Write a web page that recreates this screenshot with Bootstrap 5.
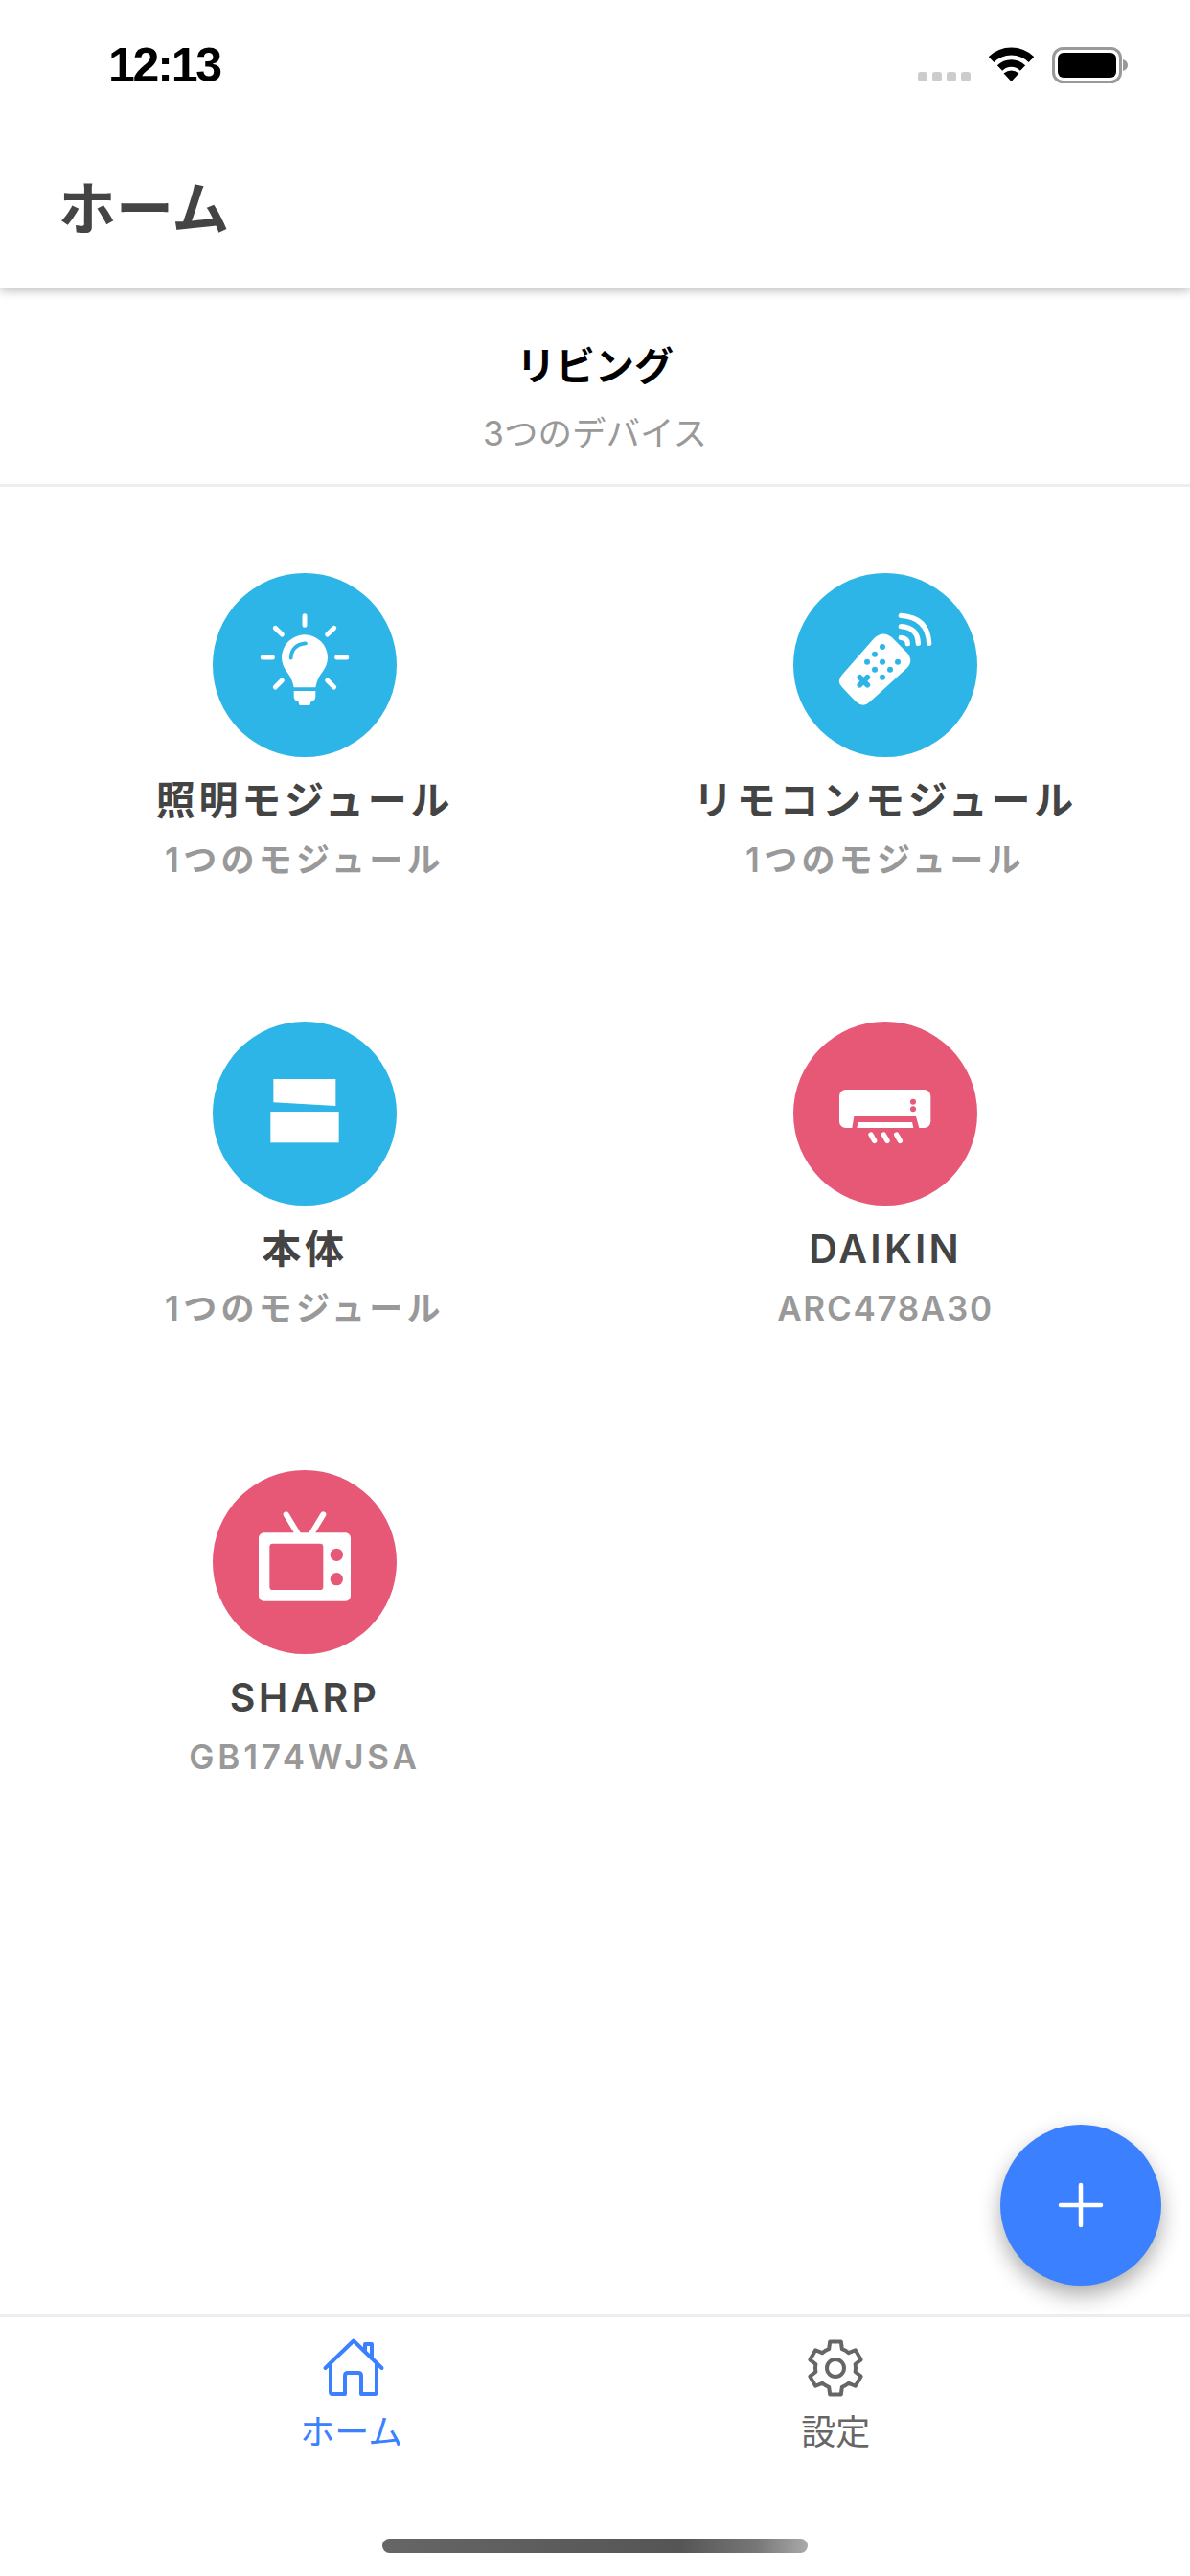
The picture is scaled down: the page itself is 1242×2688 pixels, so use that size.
<!DOCTYPE html>
<html lang="ja">
<head>
    <meta charset="UTF-8">
    <meta name="viewport" content="width=device-width, initial-scale=1.0">
    <title>ホーム</title>
    <link href="https://cdn.jsdelivr.net/npm/bootstrap@5.3.0/dist/css/bootstrap.min.css" rel="stylesheet">
    <style>
        body { font-family: Inter, "Noto Sans CJK JP", "Liberation Sans", sans-serif; background: #fff; }
        .app-page { height: 2688px; }
        .status-row { height: 100px; padding: 44px 65px 0 113px; z-index: 3; }
        .status-time { font: 700 50px/48px "Liberation Sans", sans-serif; letter-spacing: -2.2px; color: #000; }
        .signal-dots { gap: 5px; margin: 31px 19px 0 0; }
        .signal-dots span { width: 10px; height: 10px; border-radius: 3px; background: #ccc; }
        .wifi-icon { width: 47px; height: 36px; margin: 5px 19px 0 0; }
        .battery-icon { width: 79px; height: 38px; margin-top: 5px; }
        .top-head { height: 200px; padding: 0 0 0 61px; box-shadow: 0 3px 10px rgba(0,0,0,.28); z-index: 2; }
        .top-title { font-size: 60px; font-weight: 700; line-height: 1; color: #444; margin: 35px 0 0; }
        .room-head { height: 208px; border-bottom: 3px solid #eee; padding-top: 57px; }
        .room-name { font-size: 41px; font-weight: 700; line-height: 50px; color: #000; }
        .room-count { font-size: 35.500px; line-height: 50px; color: #999; margin-top: 21px; }
        .device-grid { padding: 90px 15px 0; }
        .device-cell { height: 468px; }
        .device-round { width: 192px; height: 192px; }
        .device-round svg { width: 192px; height: 192px; }
        .bg-room { background: #2cb5e6; }
        .bg-appliance { background: #e75877; }
        .device-name { font-size: 41px; font-weight: 600; line-height: 50px; letter-spacing: 3.800px; color: #444; margin-top: 20px; }
        .device-sub { font-size: 35px; font-weight: 600; line-height: 44px; letter-spacing: 4.300px; color: #999; margin-top: 15px; }
        .name-latin { letter-spacing: 3.200px; }
        .sub-latin { letter-spacing: 3.800px; }
        .sub-narrow { letter-spacing: 1.700px; }
        .add-fab { right: 30px; bottom: 303px; width: 168px; height: 168px; background: #3a80ff; border: 0; box-shadow: 0 10px 22px rgba(0,0,0,.32); }
        .add-fab svg { width: 48px; height: 48px; }
        .tab-strip { border-top: 3px solid #eee; height: 273px; padding: 21px 117px 0 114px; }
        .tab-link { color: #666; font-size: 36px; line-height: 40px; text-decoration: none; }
        .tab-link.is-on { color: #3a80ff; }
        .tab-link svg { width: 66px; height: 64px; margin-bottom: 15px; }
        .tab-link.is-on svg { margin-left: 5px; }
        .home-bar { left: 399px; bottom: 24px; width: 444px; height: 15px; border-radius: 8px; background: linear-gradient(90deg, #666 0%, #555 70%, #777 88%, #aaa 100%); }
    </style>
</head>
<body>
    <div class="app-page d-flex flex-column position-relative overflow-hidden">
        <!-- ステータスバー -->
        <div class="status-row d-flex flex-shrink-0 bg-white position-relative">
            <div class="status-time me-auto">12:13</div>
            <div class="signal-dots d-flex"><span></span><span></span><span></span><span></span></div>
            <svg class="wifi-icon" viewBox="0 0 47 36">
                <path d="M2.6 13.1A29.5 29.5 0 0 1 44.4 13.1" fill="none" stroke="#000" stroke-width="8"/>
                <path d="M11.5 22A17 17 0 0 1 35.5 22" fill="none" stroke="#000" stroke-width="7.5"/>
                <path d="M15.5 27.5Q23.5 21.5 31.5 27.5L23.5 36Z"/>
            </svg>
            <svg class="battery-icon" viewBox="0 0 79 38">
                <rect x="1.5" y="1.5" width="70" height="35" rx="10" fill="none" stroke="#999" stroke-width="3"/>
                <rect x="6" y="6" width="61" height="26" rx="6"/>
                <path d="M74 13q5 1.500 5 6t-5 6z" fill="#999"/>
            </svg>
        </div>

        <!-- ヘッダー -->
        <div class="top-head d-flex align-items-center bg-white flex-shrink-0 position-relative">
            <h1 class="top-title">ホーム</h1>
        </div>

        <div class="room-head text-center flex-shrink-0">
            <div class="room-name">リビング</div>
            <div class="room-count">3つのデバイス</div>
        </div>

        <div class="device-grid flex-grow-1">
            <div class="row g-0">
                <div class="col-6 device-cell d-flex flex-column align-items-center text-center">
                    <div class="device-round rounded-circle bg-room">
                        <svg viewBox="66 54 576 576">
                            <g stroke="#fff" stroke-width="15" stroke-linecap="round">
                                <path d="M354 188V217M262 226L283 246M446 226L425 246M223 318H253M455 318H485M262 411L283 390M446 411L425 390"/>
                            </g>
                            <path fill="#fff" d="M354 247A72 72 0 0 1 426 319C426 337 419 351 410 363C398 378 392 392 388 412H320C316 392 310 378 298 363C289 351 282 337 282 319A72 72 0 0 1 354 247Z"/>
                            <path fill="#fff" d="M320 423H388V440Q388 453 374 456L370 468H338L334 456Q320 453 320 440Z"/>
                            <path d="M311 320Q313 278 357 274" fill="none" stroke="#2cb5e6" stroke-width="11" stroke-linecap="round"/>
                        </svg>
                    </div>
                    <div class="device-name">照明モジュール</div>
                    <div class="device-sub">1つのモジュール</div>
                </div>
                <div class="col-6 device-cell d-flex flex-column align-items-center text-center">
                    <div class="device-round rounded-circle bg-room">
                        <svg viewBox="69 54 576 576">
                            <path fill="#fff" d="M322 258Q350 232 378 256L425 303Q448 330 422 354L310 456Q288 478 264 456L222 412Q203 392 222 372Z"/>
                            <g fill="#2cb5e6">
                                <circle cx="348" cy="285" r="9"/><circle cx="324" cy="308" r="9"/><circle cx="300" cy="332" r="9"/><circle cx="348" cy="332" r="9"/>
                                <circle cx="396" cy="332" r="9"/><circle cx="324" cy="356" r="9"/><circle cx="372" cy="356" r="9"/><circle cx="348" cy="380" r="9"/>
                            </g>
                            <path d="M277 380L301 404M301 380L277 404" stroke="#2cb5e6" stroke-width="17" stroke-linecap="round"/>
                            <g fill="none" stroke="#fff" stroke-width="16" stroke-linecap="round">
                                <path d="M406 256Q427 258 427 275"/>
                                <path d="M406 221Q458 224 460 274"/>
                                <path d="M406 187Q490 192 494 274"/>
                            </g>
                        </svg>
                    </div>
                    <div class="device-name">リモコンモジュール</div>
                    <div class="device-sub">1つのモジュール</div>
                </div>
                <div class="col-6 device-cell d-flex flex-column align-items-center text-center">
                    <div class="device-round rounded-circle bg-room">
                        <svg viewBox="66 48 576 576">
                            <path fill="#fff" d="M256 228H451V312L256 301Z"/>
                            <rect fill="#fff" x="247" y="330" width="214" height="97"/>
                        </svg>
                    </div>
                    <div class="device-name">本体</div>
                    <div class="device-sub">1つのモジュール</div>
                </div>
                <div class="col-6 device-cell d-flex flex-column align-items-center text-center">
                    <div class="device-round rounded-circle bg-appliance">
                        <svg viewBox="69 48 576 576">
                            <rect fill="#fff" x="213" y="261" width="286" height="120" rx="20"/>
                            <path fill="#e75877" d="M253 381L259 345H453L463 381Z"/>
                            <path fill="#fff" d="M268 381L272 363H441L445 381Z"/>
                            <circle fill="#e75877" cx="444" cy="299" r="9"/>
                            <circle fill="#e75877" cx="444" cy="322" r="9"/>
                            <path d="M312 402L323 421M352 402L363 421M392 402L403 421" stroke="#fff" stroke-width="16" stroke-linecap="round"/>
                        </svg>
                    </div>
                    <div class="device-name name-latin">DAIKIN</div>
                    <div class="device-sub sub-narrow">ARC478A30</div>
                </div>
                <div class="col-6 device-cell d-flex flex-column align-items-center text-center">
                    <div class="device-round rounded-circle bg-appliance">
                        <svg viewBox="66 42 576 576">
                            <path d="M296 181L332 240M412 181L376 240" stroke="#fff" stroke-width="18" stroke-linecap="round"/>
                            <rect fill="#fff" x="210" y="238" width="288" height="214" rx="16"/>
                            <rect fill="#e75877" x="244" y="272" width="168" height="145" rx="10"/>
                            <circle fill="#e75877" cx="454" cy="307" r="20"/>
                            <circle fill="#e75877" cx="454" cy="383" r="20"/>
                        </svg>
                    </div>
                    <div class="device-name name-latin">SHARP</div>
                    <div class="device-sub sub-latin">GB174WJSA</div>
                </div>
            </div>
        </div>

        <button class="add-fab btn rounded-circle position-absolute d-flex align-items-center justify-content-center p-0" type="button">
            <svg viewBox="0 0 48 48"><path d="M24 3V45M3 24H45" stroke="#fff" stroke-width="4.500" stroke-linecap="round"/></svg>
        </button>

        <!-- タブ -->
        <div class="tab-strip d-flex flex-shrink-0 bg-white">
            <a class="tab-link is-on flex-fill w-50 d-flex flex-column align-items-center" href="#">
                <svg viewBox="0 0 66 64" fill="none" stroke="#3a80ff" stroke-width="4" stroke-linecap="round" stroke-linejoin="round">
                    <path d="M3.500 32L33 3.500L62.500 32"/>
                    <path d="M9 27V57Q9 59 11 59H24V40Q24 37 27 37H38Q41 37 41 40V59H55Q57 59 57 57V27"/>
                    <path d="M45 13V7H52V22"/>
                </svg>
                <span>ホーム</span>
            </a>
            <a class="tab-link flex-fill w-50 d-flex flex-column align-items-center" href="#">
                <svg viewBox="-3 -2 66 64" fill="none" stroke="#666" stroke-width="4" stroke-linejoin="round">
                    <path d="M23.160 10.140L24.180 2.610H35.820L36.840 10.140A21 21 0 0 1 43.780 14.150L50.810 11.260L56.630 21.340L50.620 25.990A21 21 0 0 1 50.620 34.010L56.630 38.660L50.810 48.740L43.780 45.850A21 21 0 0 1 36.840 49.860L35.820 57.390H24.180L23.160 49.860A21 21 0 0 1 16.220 45.850L9.190 48.740L3.370 38.660L9.380 34.010A21 21 0 0 1 9.380 25.990L3.370 21.340L9.190 11.260L16.220 14.150A21 21 0 0 1 23.160 10.140Z"/>
                    <circle cx="30" cy="30" r="9"/>
                </svg>
                <span>設定</span>
            </a>
        </div>
        <div class="home-bar position-absolute"></div>
    </div>

    <script src="https://cdn.jsdelivr.net/npm/bootstrap@5.3.0/dist/js/bootstrap.bundle.min.js"></script>
</body>
</html>
